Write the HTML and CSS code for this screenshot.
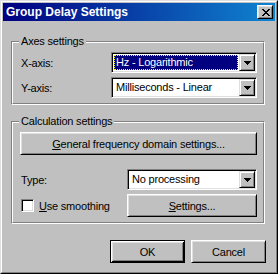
FILE: index.html
```html
<!DOCTYPE html>
<html>
<head>
    <title>Group Delay Settings</title>
    <link rel="stylesheet" href="styles.css">
</head>
<body>
    <div class="window">
        <div class="frame">
            <div class="titlebar">
                <span class="title">Group Delay Settings</span>
                <button class="close" type="button">
                    <svg width="8" height="7" viewBox="0 0 8 7"><path d="M0 0h2v1h1v1h2V1h1V0h2v1H7v1H6v1H5v1h1v1h1v1h1v1H6V6H5V5H3v1H2v1H0V6h1V5h1V4h1V3H2V2H1V1H0z" fill="#000"/></svg>
                </button>
            </div>

            <div class="content">
                <!-- Axes -->
                <div class="group axes">
                    <div class="group-inner">
                        <div class="legend">Axes settings</div>
                        <div class="row first">
                            <span class="label">X-axis:</span>
                            <div class="combo wide focused">
                                <span class="value">Hz - Logarithmic</span>
                                <span class="arrow"><svg width="7" height="4" viewBox="0 0 7 4"><path d="M0 0h7v1H0zM1 1h5v1H1zM2 2h3v1H2zM3 3h1v1H3z" fill="#000"/></svg></span>
                            </div>
                        </div>
                        <div class="row">
                            <span class="label">Y-axis:</span>
                            <div class="combo wide">
                                <span class="value">Milliseconds - Linear</span>
                                <span class="arrow"><svg width="7" height="4" viewBox="0 0 7 4"><path d="M0 0h7v1H0zM1 1h5v1H1zM2 2h3v1H2zM3 3h1v1H3z" fill="#000"/></svg></span>
                            </div>
                        </div>
                    </div>
                </div>

                <!-- Calculation -->
                <div class="group calc">
                    <div class="group-inner">
                        <div class="legend">Calculation settings</div>
                        <button class="btn general" type="button"><u>G</u>eneral frequency domain settings...</button>
                        <div class="row type-row">
                            <span class="label">Type:</span>
                            <div class="combo narrow">
                                <span class="value">No processing</span>
                                <span class="arrow"><svg width="7" height="4" viewBox="0 0 7 4"><path d="M0 0h7v1H0zM1 1h5v1H1zM2 2h3v1H2zM3 3h1v1H3z" fill="#000"/></svg></span>
                            </div>
                        </div>
                        <div class="row check-row">
                            <span class="checkbox"></span>
                            <span class="label"><u>U</u>se smoothing</span>
                            <button class="btn settings" type="button"><u>S</u>ettings...</button>
                        </div>
                    </div>
                </div>

                <div class="actions">
                    <button class="btn dialog default" type="button">OK</button>
                    <button class="btn dialog" type="button">Cancel</button>
                </div>
            </div>
        </div>
    </div>
</body>
</html>
```

FILE: styles.css
```css
* { box-sizing: border-box; }

body {
    margin: 0;
    background: #c0c0c0;
    font-family: "Liberation Sans", Arial, sans-serif;
    font-size: 11px;
    letter-spacing: -0.2px;
    color: #000;
}

.window {
    width: 278px;
    height: 274px;
    border: 1px solid;
    border-color: #dfdfdf #000 #000 #dfdfdf;
    background: #c0c0c0;
}

.frame {
    height: 100%;
    border: 1px solid;
    border-color: #fff #808080 #808080 #fff;
    padding: 1px;
}

.titlebar {
    height: 18px;
    display: flex;
    align-items: center;
    justify-content: space-between;
    padding: 0 2px 0 3px;
    background: linear-gradient(90deg, #000080, #1084d0);
}

.title {
    color: #fff;
    font-weight: bold;
    font-size: 12px;
    letter-spacing: 0;
}

.close {
    width: 16px;
    height: 14px;
    padding: 0 0 0 1px;
    display: flex;
    align-items: center;
    justify-content: center;
    background: #c0c0c0;
    border: 1px solid;
    border-color: #fff #000 #000 #fff;
    box-shadow: inset 1px 1px #dfdfdf, inset -1px -1px #808080;
}

.content { padding: 0 9px 0 8px; }

.group {
    margin: 20px 1px 0 0;
    border: 1px solid;
    border-color: #808080 #fff #fff #808080;
}
.group.calc { margin-top: 16px; }

.group-inner {
    border: 1px solid;
    border-color: #fff #808080 #808080 #fff;
    padding: 0 6px 5px 8px;
}

.legend {
    width: max-content;
    height: 13px;
    line-height: 13px;
    margin: -8px 0 0 -2px;
    padding: 0 2px;
    background: #c0c0c0;
}

.row {
    display: flex;
    align-items: center;
    height: 21px;
    margin-top: 4px;
}
.row .label { flex: 1; }
.type-row { margin-top: 14px; }
.check-row { height: 23px; }

.combo {
    height: 21px;
    display: flex;
    align-items: center;
    padding: 0 0 0 1px;
    background: #fff;
    border: 1px solid;
    border-color: #808080 #fff #fff #808080;
    box-shadow: inset 1px 1px #000, inset -1px -1px #dfdfdf;
}
.combo.wide { width: 146px; }
.combo.narrow { width: 130px; }

.combo .value {
    flex: 1;
    height: 15px;
    line-height: 13px;
    margin: 0 1px 0 1px;
    padding-left: 1px;
    border: 1px solid transparent;
    white-space: nowrap;
    overflow: hidden;
}
.combo.focused .value {
    background: #000080;
    color: #fff;
    border: 1px dotted #ff0;
}

.combo .arrow {
    width: 16px;
    height: 17px;
    margin-right: 1px;
    display: flex;
    align-items: center;
    justify-content: center;
    background: #c0c0c0;
    border: 1px solid;
    border-color: #dfdfdf #000 #000 #dfdfdf;
    box-shadow: inset 1px 1px #fff, inset -1px -1px #808080;
}
.combo .arrow svg { margin: 1px 0 0 0; }

.btn {
    height: 23px;
    padding: 0;
    font: inherit;
    letter-spacing: inherit;
    color: #000;
    background: #c0c0c0;
    border: 1px solid;
    border-color: #fff #000 #000 #fff;
    box-shadow: inset 1px 1px #dfdfdf, inset -1px -1px #808080;
}
.btn.general {
    display: block;
    width: 237px;
    margin: 4px 0 0 -1px;
}
.btn.settings { width: 130px; }

.checkbox {
    width: 13px;
    height: 13px;
    margin-right: 5px;
    background: #fff;
    border: 1px solid;
    border-color: #808080 #fff #fff #808080;
    box-shadow: inset 1px 1px #000, inset -1px -1px #dfdfdf;
}

.actions {
    display: flex;
    justify-content: flex-end;
    gap: 6px;
    margin-top: 16px;
}
.btn.dialog { width: 75px; }
.btn.default {
    border-color: #000;
    box-shadow: inset 1px 1px #fff, inset -1px -1px #000, inset 2px 2px #dfdfdf, inset -2px -2px #808080;
}
```
